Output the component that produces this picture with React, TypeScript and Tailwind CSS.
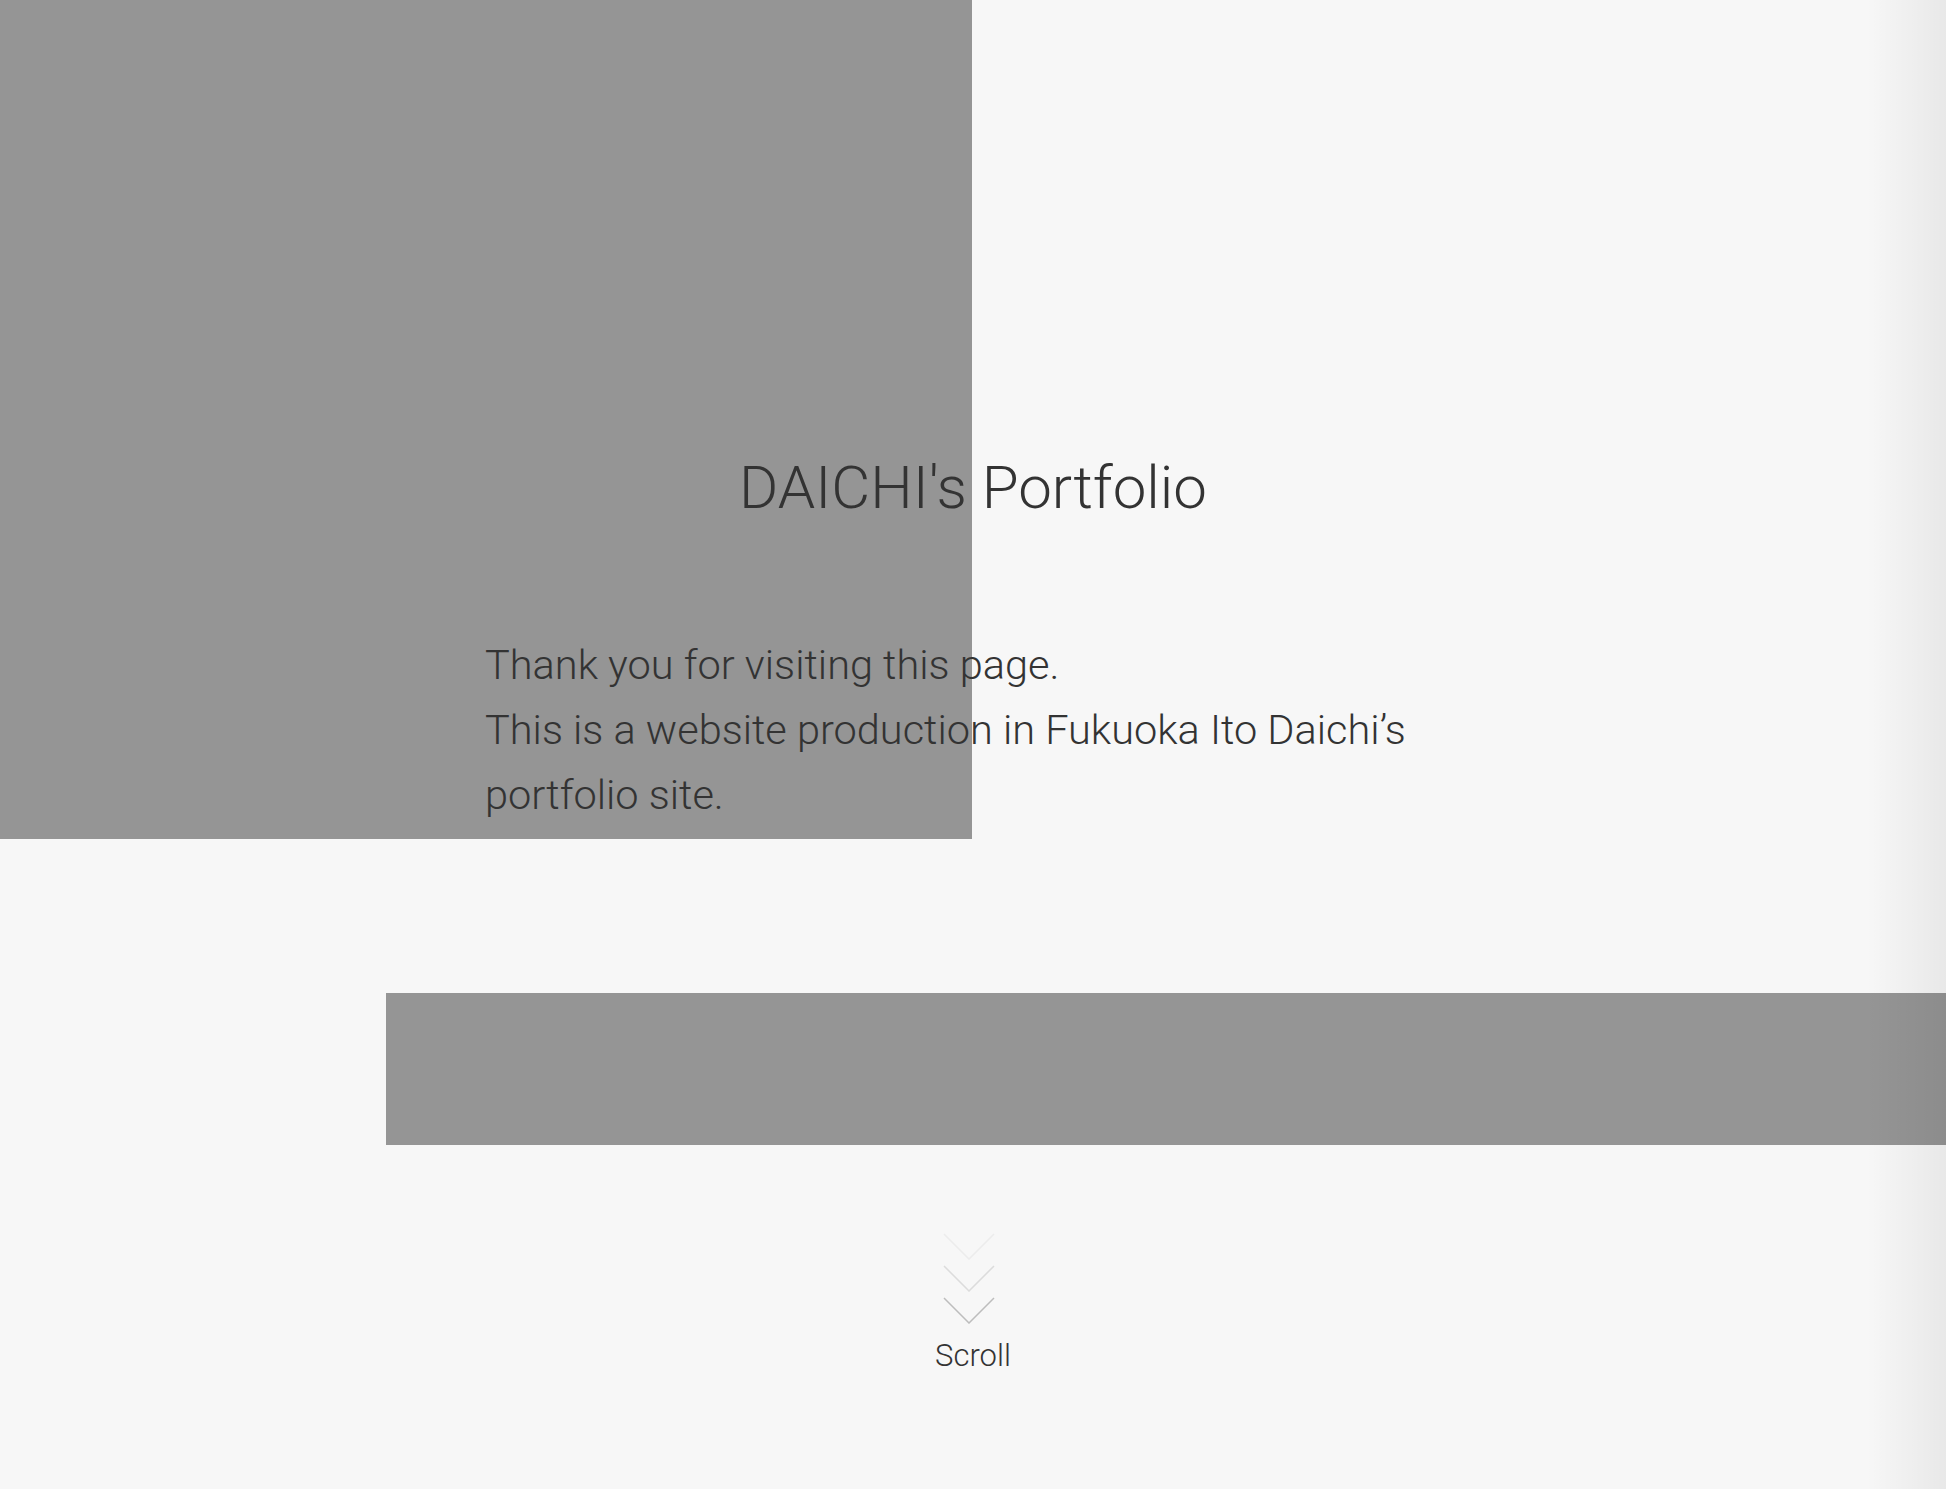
import React from "react";

const font = { fontFamily: "Roboto, 'Noto Sans', sans-serif" };

const Chevron = ({ color }: { color: string }) => (
  <svg width="52" height="27" viewBox="0 0 52 27" fill="none">
    <path d="M1 1l25 25L51 1" stroke={color} strokeWidth="1.5" />
  </svg>
);

export default function App() {
  return (
    <div
      className="relative w-full h-[1489px] overflow-hidden bg-[#f7f7f7] text-[#333]"
      style={font}
    >
      {/* Hero */}
      <section className="relative h-[839px]">
        <div className="absolute left-0 top-0 w-[972px] h-full bg-[#959595]" />
        <div className="relative flex flex-col pt-[458px]">
          <h1 className="text-center text-[60px] leading-none font-light">
            DAICHI's Portfolio
          </h1>
          <p className="mt-[114px] ml-[485px] text-[41.5px] leading-[65px] font-light">
            Thank you for visiting this page.
            <br />
            This is a website production in Fukuoka Ito Daichi’s
            <br />
            portfolio site.
          </p>
        </div>
      </section>

      {/* Band */}
      <div className="mt-[154px] ml-[386px] h-[152px] bg-[#959595]" />

      {/* Scroll */}
      <div className="mt-[88px] flex flex-col items-center">
        <div className="flex flex-col items-center gap-[5px] -ml-[8px]">
          <Chevron color="#ececec" />
          <Chevron color="#dcdcdc" />
          <Chevron color="#bdbdbd" />
        </div>
        <span className="mt-[16px] text-[31px] leading-none font-light">Scroll</span>
      </div>

      {/* right edge shade */}
      <div className="absolute right-0 top-0 h-full w-[80px] bg-gradient-to-r from-transparent to-black/[0.06]" />
    </div>
  );
}
